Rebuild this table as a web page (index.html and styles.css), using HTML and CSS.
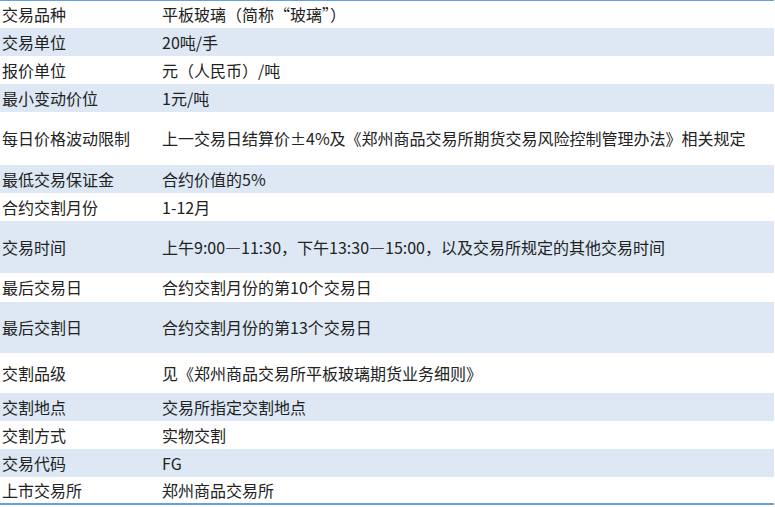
FILE: index.html
```html
<!DOCTYPE html>
<html lang="zh-CN">
<head>
<meta charset="utf-8">
<title>平板玻璃期货合约</title>
<link rel="stylesheet" href="styles.css">
</head>
<body>
<table class="spec">
  <tbody>
    <tr class="row first"><td class="k">交易品种</td><td class="v">平板玻璃（简称“玻璃”）</td></tr>
    <tr class="row alt"><td class="k">交易单位</td><td class="v">20吨/手</td></tr>
    <tr class="row"><td class="k">报价单位</td><td class="v">元（人民币）/吨</td></tr>
    <tr class="row alt"><td class="k">最小变动价位</td><td class="v">1元/吨</td></tr>
    <tr class="row tall"><td class="k">每日价格波动限制</td><td class="v">上一交易日结算价±4%及《郑州商品交易所期货交易风险控制管理办法》相关规定</td></tr>
    <tr class="row alt"><td class="k">最低交易保证金</td><td class="v">合约价值的5%</td></tr>
    <tr class="row"><td class="k">合约交割月份</td><td class="v">1-12月</td></tr>
    <tr class="row alt r52"><td class="k">交易时间</td><td class="v">上午9:00—11:30，下午13:30—15:00，以及交易所规定的其他交易时间</td></tr>
    <tr class="row r29"><td class="k">最后交易日</td><td class="v">合约交割月份的第10个交易日</td></tr>
    <tr class="row alt r51"><td class="k">最后交割日</td><td class="v">合约交割月份的第13个交易日</td></tr>
    <tr class="row mid"><td class="k">交割品级</td><td class="v">见《郑州商品交易所平板玻璃期货业务细则》</td></tr>
    <tr class="row alt"><td class="k">交割地点</td><td class="v">交易所指定交割地点</td></tr>
    <tr class="row"><td class="k">交割方式</td><td class="v">实物交割</td></tr>
    <tr class="row alt"><td class="k">交易代码</td><td class="v">FG</td></tr>
    <tr class="row last"><td class="k">上市交易所</td><td class="v">郑州商品交易所</td></tr>
  </tbody>
</table>
</body>
</html>
```

FILE: styles.css
```css
html, body {
  margin: 0;
  padding: 0;
  background: #ffffff;
}

body {
  font-family: "Noto Sans CJK SC", "Noto Sans", sans-serif;
  font-size: 16px;
  color: #222222;
}

.spec {
  width: 774px;
  border-collapse: collapse;
  border-top: 1px solid #6a9fdc;
  border-bottom: 2px solid #6a9fdc;
}

.row {
  height: 28px;
}

.row td {
  padding: 0;
  vertical-align: middle;
  line-height: 20px;
  white-space: nowrap;
}

.row.alt {
  background: #dde8f4;
}

.row.first { height: 27px; }
.row.tall { height: 53px; }
.row.r52 { height: 52px; }
.row.r29 { height: 29px; }
.row.r51 { height: 51px; }
.row.mid { height: 40px; }
.row.last { height: 27px; }

.k {
  width: 160px;
  padding-left: 2px !important;
}

.v {
  padding-left: 0;
}
```
